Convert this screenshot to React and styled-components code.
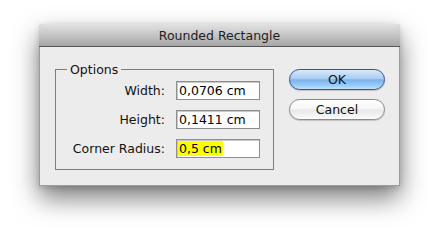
import React from 'react'
import styled, { createGlobalStyle } from 'styled-components'

const Global = createGlobalStyle`
    html, body {
        margin: 0;
        background: #fff;
        font-family: "DejaVu Sans", "Liberation Sans", sans-serif;
    }
`

const Page = styled.div`
    width: 440px;
    height: 241px;
    padding: 24px 0 0 39px;
    box-sizing: border-box;
    overflow: hidden;
`

const Window = styled.div`
    width: 361px;
    height: 162px;
    box-sizing: border-box;
    background: #ececec;
    border: 1px solid #9c9c9c;
    border-top: none;
    border-radius: 4px 4px 0 0;
    box-shadow: 0 12px 26px rgba(0, 0, 0, 0.52), 0 2px 6px rgba(0, 0, 0, 0.15);
    display: flex;
    flex-direction: column;
`

const TitleBar = styled.div`
    height: 22px;
    margin: 0 -1px;
    border-radius: 4px 4px 0 0;
    background: linear-gradient(to bottom, #e2e2e2 0%, #cbcbcb 40%, #a6a6a6 100%);
    border-bottom: 1px solid #545454;
    display: flex;
    align-items: center;
    justify-content: center;
    font-size: 12.5px;
    color: #1e1e1e;
`

const Content = styled.div`
    display: flex;
    align-items: flex-start;
    padding: 15px 0 0 15px;
`

const Group = styled.fieldset`
    margin: 0;
    width: 219px;
    height: 108px;
    box-sizing: border-box;
    border: 1px solid #7e7e7e;
    padding: 4px 13px 0 0;
    display: grid;
    grid-template-columns: 1fr 84px;
    grid-auto-rows: 19px;
    row-gap: 10px;
    column-gap: 11px;
    align-content: start;
`

const Legend = styled.legend`
    margin-left: 11px;
    padding: 0 3px;
    font-size: 12.5px;
    line-height: 15px;
    color: #111;
`

const Label = styled.label`
    text-align: right;
    align-self: center;
    font-size: 12.5px;
    color: #111;
`

const Field = styled.div`
    height: 19px;
    box-sizing: border-box;
    background: #fff;
    border: 1px solid #8e8e8e;
    box-shadow: inset 1px 1px 0 #c8c8c8;
    padding: 1px;
    display: flex;
    font-size: 12.5px;
    line-height: 16px;
    color: #000;
`

const Value = styled.span`
    padding: 0 1px;
    background: ${p => (p.$selected ? '#ffff00' : 'transparent')};
`

const Buttons = styled.div`
    display: flex;
    flex-direction: column;
    gap: 9px;
    margin: 7px 0 0 15px;
`

const Button = styled.button`
    width: 96px;
    height: 21px;
    border-radius: 11px;
    font-family: "DejaVu Sans", "Liberation Sans", sans-serif;
    font-size: 12.5px;
    color: #111;
    padding: 0;
    border: 1px solid ${p => (p.$primary ? '#34519a' : '#8a8a8a')};
    background: ${p =>
        p.$primary
            ? 'linear-gradient(to bottom, #d9eafb 0%, #a9cdf3 45%, #7cb2ec 52%, #9fd0f8 85%, #c2e3fb 100%)'
            : 'linear-gradient(to bottom, #ffffff 0%, #f6f6f6 45%, #e8e8e8 52%, #f4f4f4 85%, #ffffff 100%)'};
    box-shadow: 0 1px 1px rgba(0, 0, 0, 0.18);
`

const rows = [
    { label: 'Width:', value: '0,0706 cm' },
    { label: 'Height:', value: '0,1411 cm' },
    { label: 'Corner Radius:', value: '0,5 cm', selected: true },
]

export default function App() {
    return (
        <Page>
            <Global />
            <Window>
                <TitleBar>Rounded Rectangle</TitleBar>
                <Content>
                    <Group>
                        <Legend>Options</Legend>
                        {rows.map(r => (
                            <React.Fragment key={r.label}>
                                <Label>{r.label}</Label>
                                <Field>
                                    <Value $selected={r.selected}>{r.value}</Value>
                                </Field>
                            </React.Fragment>
                        ))}
                    </Group>
                    <Buttons>
                        <Button $primary>OK</Button>
                        <Button>Cancel</Button>
                    </Buttons>
                </Content>
            </Window>
        </Page>
    )
}
